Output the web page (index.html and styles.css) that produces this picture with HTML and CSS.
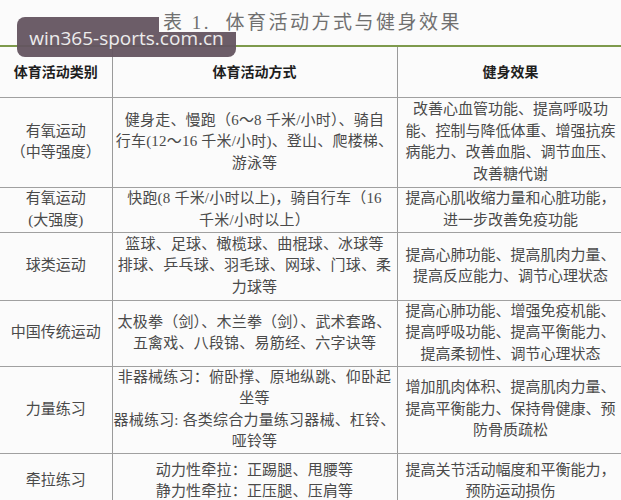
FILE: index.html
```html
<!DOCTYPE html>
<html lang="zh">
<head>
<meta charset="utf-8">
<title>表 1. 体育活动方式与健身效果</title>
<link rel="stylesheet" href="styles.css">
</head>
<body>
<div class="page">
  <div class="title"><span class="title-text">表 1.&nbsp; 体育活动方式与健身效果</span></div>
  <table class="tbl">
    <colgroup>
      <col class="c1">
      <col class="c2">
      <col class="c3">
    </colgroup>
    <thead>
      <tr class="r-head">
        <th>体育活动类别</th>
        <th>体育活动方式</th>
        <th>健身效果</th>
      </tr>
    </thead>
    <tbody>
      <tr class="r1">
        <td>有氧运动<br>（中等强度）</td>
        <td class="way">健身走、慢跑（6～8 千米/小时）、骑自<br>行车(12～16 千米/小时)、登山、爬楼梯、<br>游泳等</td>
        <td>改善心血管功能、提高呼吸功<br>能、控制与降低体重、增强抗疾<br>病能力、改善血脂、调节血压、<br>改善糖代谢</td>
      </tr>
      <tr class="r2">
        <td>有氧运动<br>(大强度)</td>
        <td class="way">快跑(8 千米/小时以上)，骑自行车（16<br>千米/小时以上）</td>
        <td>提高心肌收缩力量和心脏功能，<br>进一步改善免疫功能</td>
      </tr>
      <tr class="r3">
        <td>球类运动</td>
        <td class="way">篮球、足球、橄榄球、曲棍球、冰球等<br>排球、乒乓球、羽毛球、网球、门球、柔<br>力球等</td>
        <td>提高心肺功能、提高肌肉力量、<br>提高反应能力、调节心理状态</td>
      </tr>
      <tr class="r4">
        <td>中国传统运动</td>
        <td class="way">太极拳（剑）、木兰拳（剑）、武术套路、<br>五禽戏、八段锦、易筋经、六字诀等</td>
        <td>提高心肺功能、增强免疫机能、<br>提高呼吸功能、提高平衡能力、<br>提高柔韧性、调节心理状态</td>
      </tr>
      <tr class="r5">
        <td>力量练习</td>
        <td class="way">非器械练习：俯卧撑、原地纵跳、仰卧起<br>坐等<br>器械练习: 各类综合力量练习器械、杠铃、<br>哑铃等</td>
        <td>增加肌肉体积、提高肌肉力量、<br>提高平衡能力、保持骨健康、预<br>防骨质疏松</td>
      </tr>
      <tr class="r6">
        <td>牵拉练习</td>
        <td class="way">动力性牵拉：正踢腿、甩腰等<br>静力性牵拉：正压腿、压肩等</td>
        <td>提高关节活动幅度和平衡能力，<br>预防运动损伤</td>
      </tr>
    </tbody>
  </table>
  <div class="watermark">win365-sports.com.cn</div>
</div>
</body>
</html>
```

FILE: styles.css
```css
html, body {
  margin: 0;
  padding: 0;
  background: #fbfbfb;
}

.page {
  position: relative;
  width: 621px;
  height: 500px;
  overflow: hidden;
  font-family: "Liberation Serif", "Noto Sans CJK SC", serif;
  color: #4a4a4a;
}

.title {
  height: 45px;
  box-sizing: border-box;
  padding-top: 13px;
  padding-left: 4px;
  text-align: center;
  font-size: 19px;
  line-height: 19px;
  letter-spacing: 2.5px;
  color: #707070;
}

.title-text {
  position: relative;
  z-index: 2;
  display: inline-block;
  padding: 0 4px;
  line-height: 19px;
  background: #fbfbfb;
}

.tbl {
  width: 624px;
  table-layout: fixed;
  border-collapse: collapse;
  border-top: 2px solid #7e9a4c;
  font-size: 15px;
  line-height: 21.5px;
}

.c1 { width: 112px; }
.c2 { width: 285px; }
.c3 { width: 227px; }

.tbl th,
.tbl td {
  padding: 0 3px;
  text-align: center;
  vertical-align: middle;
  border-right: 1px solid #9a9a9a;
  border-bottom: 1px solid #a0a0a0;
  overflow: hidden;
  white-space: nowrap;
}

.tbl th {
  font-family: "Noto Sans CJK SC", sans-serif;
  font-weight: 700;
  font-size: 14px;
  color: #1e1e1e;
}

.tbl td.way {
  padding: 0 1px;
  letter-spacing: 0.2px;
}

.r-head { height: 51px; }
.r1 { height: 90px; }
.r2 { height: 45px; }
.r3 { height: 68px; }
.r4 { height: 66px; }
.r5 { height: 86px; }
.r6 { height: 56px; }

.watermark {
  position: absolute;
  z-index: 1;
  left: 17px;
  top: 17px;
  width: 219px;
  height: 40px;
  border-radius: 8px;
  background: rgba(100, 84, 96, 0.95);
  color: #ececec;
  font-family: "Open Sans", sans-serif;
  font-size: 19px;
  line-height: 42px;
  text-align: center;
}
```
